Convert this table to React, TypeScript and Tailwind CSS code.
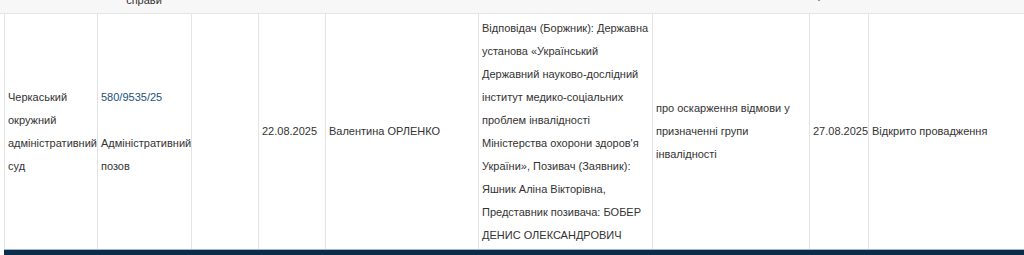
const cols = 'grid grid-cols-[93px_94px_67px_67px_153px_174px_157px_59px_1fr]'

function Cell({ children, className = '' }: { children?: React.ReactNode; className?: string }) {
  return (
    <div className={`flex items-center border-l border-[#e4e4e4] px-[3px] py-[2px] ${className}`}>
      <div>{children}</div>
    </div>
  )
}

export default function App() {
  return (
    <div className="h-[255px] w-[1024px] overflow-hidden bg-white font-['Liberation_Sans',Arial,sans-serif] text-[11px] leading-[23px] text-[#333]">
      <div className="h-[14px] border-b border-[#e6e6e6] bg-[#f7f7f7]">
        <div className={`${cols} ml-[4px] h-[13px]`}>
          <div />
          <div className="flex h-[13px] flex-col justify-end overflow-hidden pb-[5px] text-center leading-4">
            <span>Номер</span>
            <span>справи</span>
          </div>
          <div />
          <div />
          <div />
          <div />
          <div />
          <div className="flex h-[13px] flex-col justify-end overflow-hidden pb-[10px] text-center leading-4">
            <span>Дата</span>
            <span>ухвалення рішення</span>
          </div>
          <div />
        </div>
      </div>
      <div className={`${cols} ml-[4px] h-[235px]`}>
        <Cell>
          Черкаський
          <br />
          окружний
          <br />
          адміністративний
          <br />
          суд
        </Cell>
        <Cell>
          <a href="#" className="text-[#1d4f7c]">
            580/9535/25
          </a>
          <br />
          <br />
          Адміністративний
          <br />
          позов
        </Cell>
        <Cell />
        <Cell>22.08.2025</Cell>
        <Cell>Валентина ОРЛЕНКО</Cell>
        <Cell>
          Відповідач (Боржник): Державна установа «Український Державний науково-дослідний інститут
          медико-соціальних проблем інвалідності Міністерства охорони здоров'я України», Позивач
          (Заявник): Яшник Аліна Вікторівна, Представник позивача: БОБЕР ДЕНИС ОЛЕКСАНДРОВИЧ
        </Cell>
        <Cell>про оскарження відмови у призначенні групи інвалідності</Cell>
        <Cell>27.08.2025</Cell>
        <Cell>Відкрито провадження</Cell>
      </div>
      <div className="ml-[4px] h-[6px] border-t border-[#9fb6cc] bg-[#0c2c4c]" />
    </div>
  )
}
